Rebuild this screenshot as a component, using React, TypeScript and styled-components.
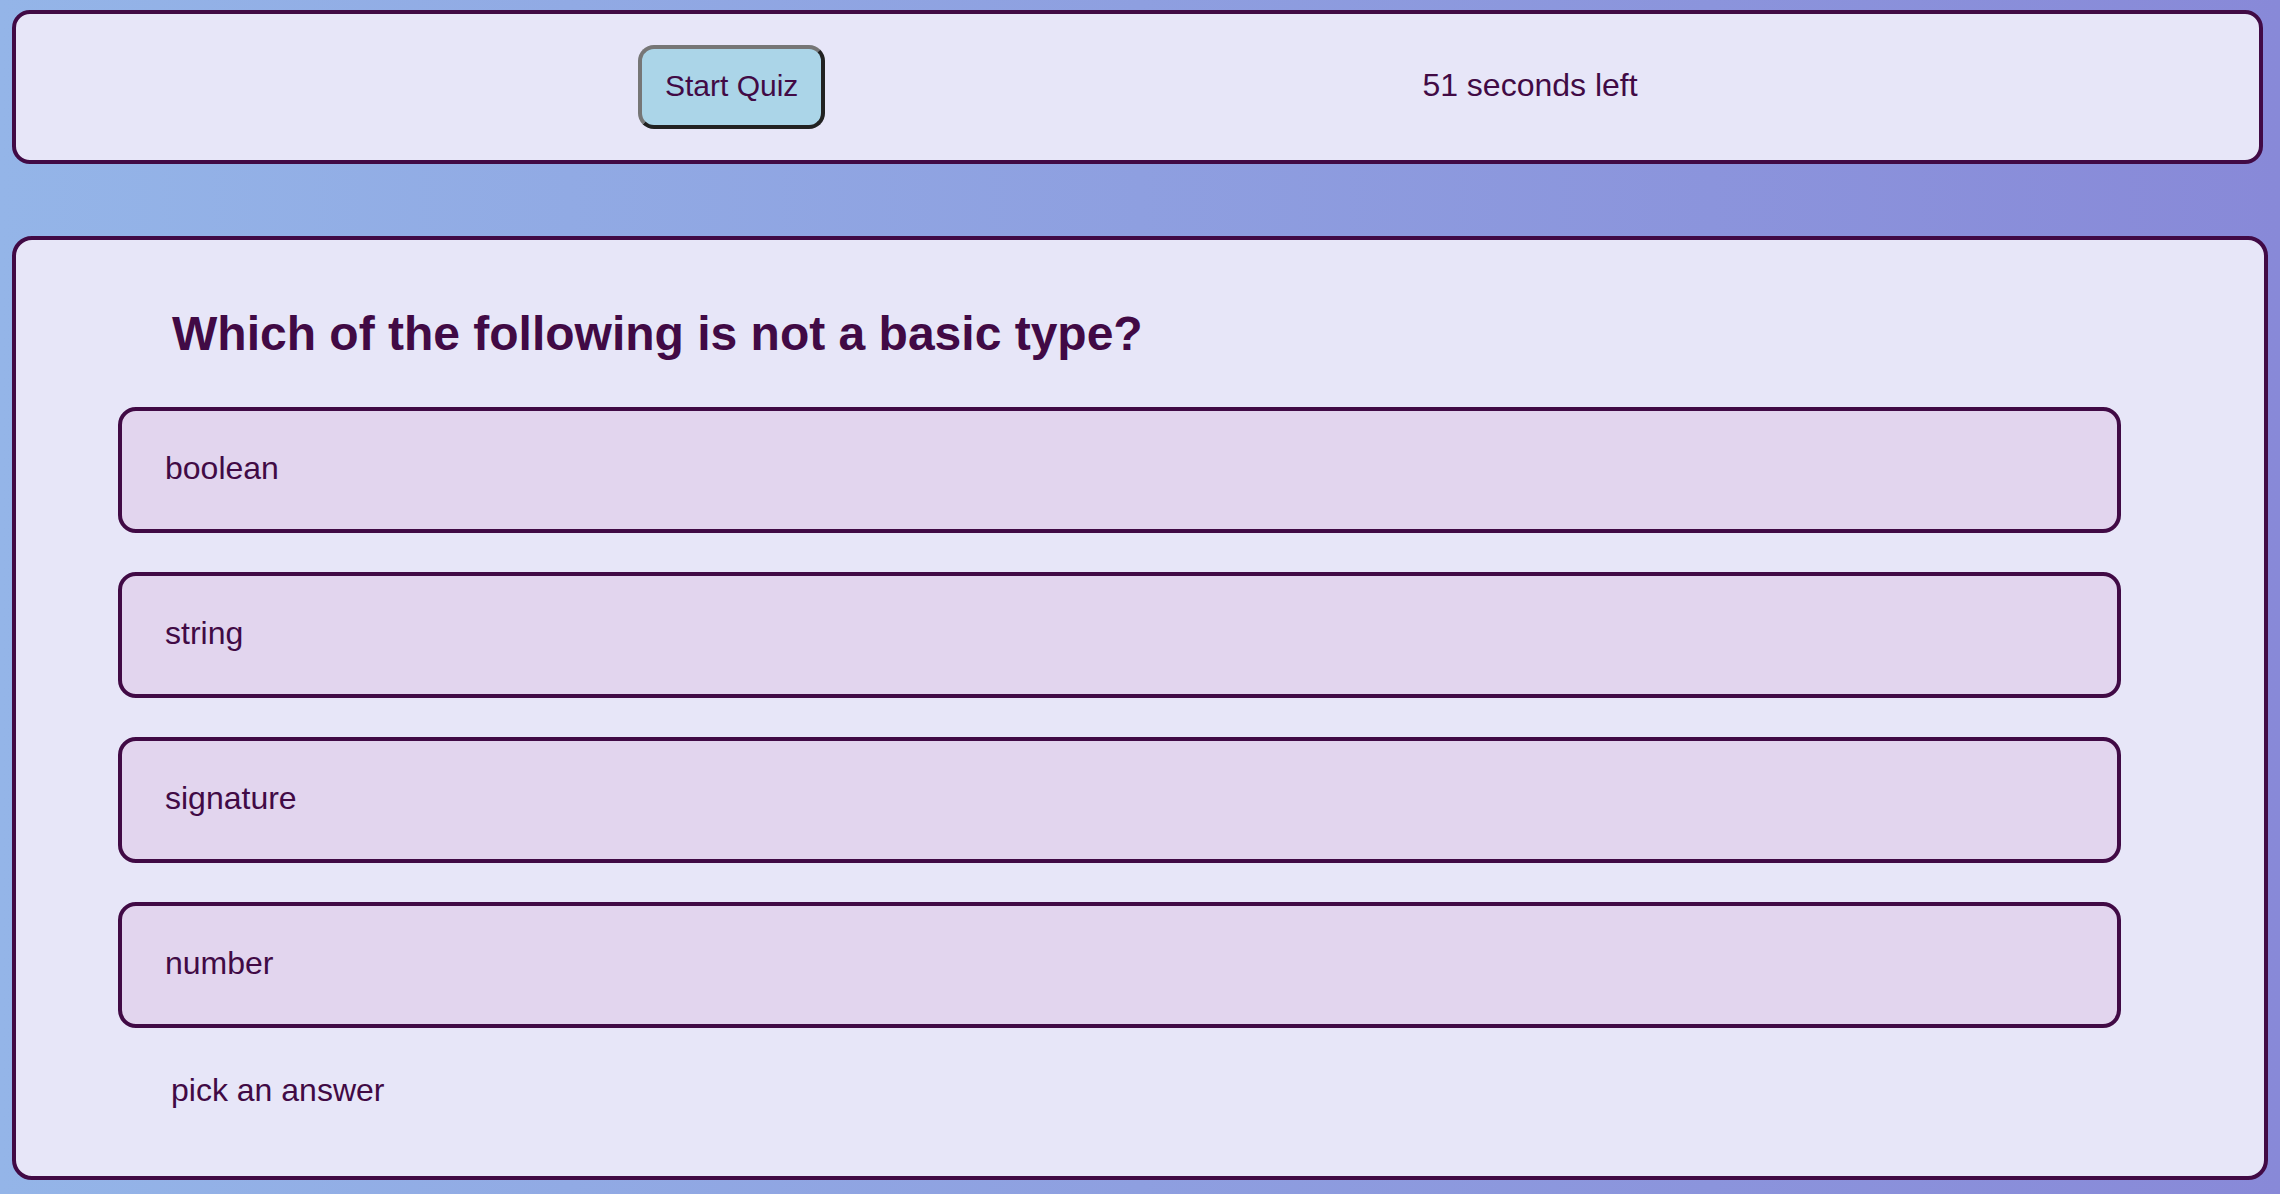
import React from "react";
import styled, { createGlobalStyle } from "styled-components";

const GlobalStyle = createGlobalStyle`
  html, body {
    margin: 0;
    padding: 0;
    min-height: 100%;
  }
  body {
    min-height: 1194px;
    background: linear-gradient(to right, #94b5e8 0%, #8889d8 100%);
    font-family: "Liberation Sans", Arial, Helvetica, sans-serif;
    color: #410a45;
  }
`;

const Page = styled.div`
  display: flex;
  flex-direction: column;
  gap: 72px;
  padding: 10px 12px 14px 12px;
  box-sizing: border-box;
`;

const Header = styled.header`
  display: flex;
  align-items: center;
  gap: 597px;
  box-sizing: border-box;
  height: 154px;
  margin-right: 5px;
  padding-left: 622px;
  background: #e7e6f8;
  border: 4px solid #410a45;
  border-radius: 18px;
`;

const StartButton = styled.button`
  font-family: "Liberation Sans", Arial, Helvetica, sans-serif;
  font-size: 30px;
  line-height: 1.15;
  color: #410a45;
  background: #abd5e8;
  padding: 20px 23px 22px;
  border-width: 4px;
  border-style: solid;
  border-color: #767676 #222222 #222222 #767676;
  border-radius: 16px;
  cursor: pointer;
`;

const Timer = styled.p`
  margin: 0 0 3px 0;
  font-size: 32px;
  line-height: 1.15;
`;

const Card = styled.main`
  display: flex;
  flex-direction: column;
  box-sizing: border-box;
  height: 944px;
  padding: 66px 143px 0 102px;
  background: #e7e6f8;
  border: 4px solid #410a45;
  border-radius: 20px;
`;

const Question = styled.h2`
  margin: 0 0 46px 54px;
  font-size: 48px;
  font-weight: 700;
  line-height: 1.15;
`;

const Options = styled.div`
  display: flex;
  flex-direction: column;
  gap: 39px;
`;

const Option = styled.button`
  display: flex;
  align-items: center;
  box-sizing: border-box;
  height: 126px;
  width: 100%;
  padding: 0 0 3px 43px;
  font-family: "Liberation Sans", Arial, Helvetica, sans-serif;
  font-size: 32px;
  line-height: 1.15;
  color: #410a45;
  text-align: left;
  background: #e2d5ee;
  border: 4px solid #410a45;
  border-radius: 18px;
  cursor: pointer;
`;

const Status = styled.p`
  margin: 44px 0 0 53px;
  font-size: 32px;
  line-height: 1.15;
`;

const options = ["boolean", "string", "signature", "number"];

export default function App() {
  return (
    <>
      <GlobalStyle />
      <Page>
        <Header>
          <StartButton>Start Quiz</StartButton>
          <Timer>51 seconds left</Timer>
        </Header>
        <Card>
          <Question>Which of the following is not a basic type?</Question>
          <Options>
            {options.map((o) => (
              <Option key={o}>{o}</Option>
            ))}
          </Options>
          <Status>pick an answer</Status>
        </Card>
      </Page>
    </>
  );
}
